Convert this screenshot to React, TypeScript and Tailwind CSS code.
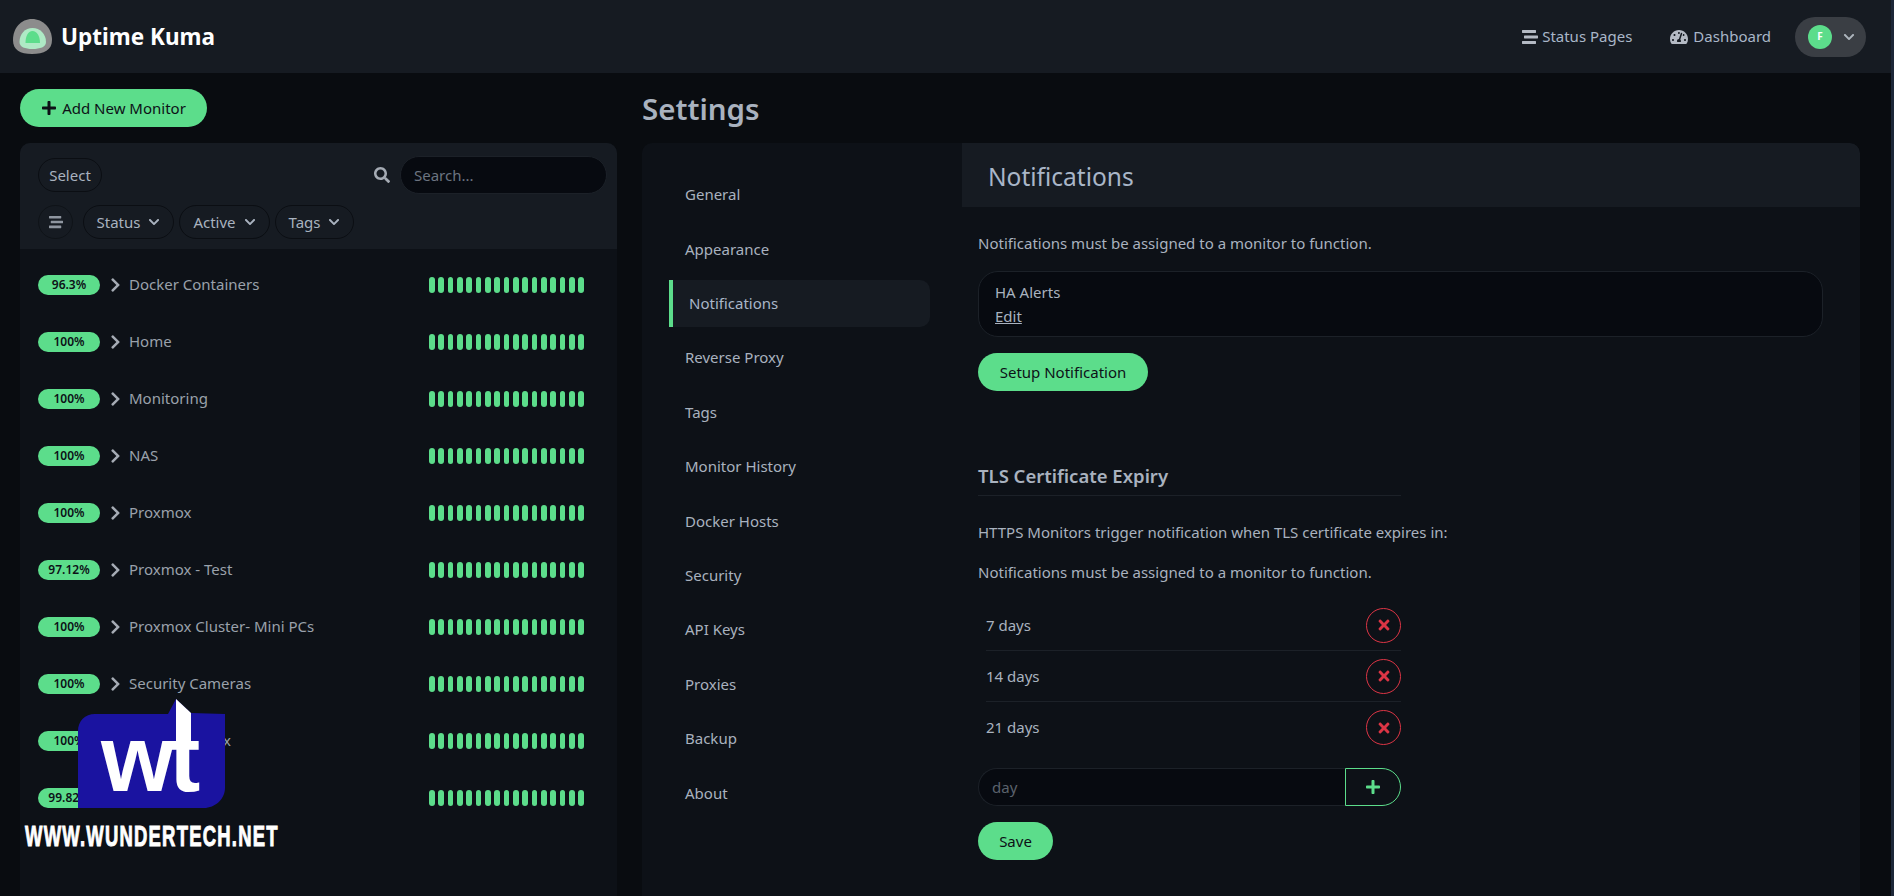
import { FaChevronDown, FaChevronRight, FaPlus, FaSearch, FaStream, FaTachometerAlt, FaTimes } from 'react-icons/fa';

const monitors = [
  { uptime: '96.3%', name: 'Docker Containers' },
  { uptime: '100%', name: 'Home' },
  { uptime: '100%', name: 'Monitoring' },
  { uptime: '100%', name: 'NAS' },
  { uptime: '100%', name: 'Proxmox' },
  { uptime: '97.12%', name: 'Proxmox - Test' },
  { uptime: '100%', name: 'Proxmox Cluster- Mini PCs' },
  { uptime: '100%', name: 'Security Cameras' },
  { uptime: '100%', name: 'Network - Plex' },
  { uptime: '99.82%', name: 'UniFi' },
];

const menu = ['General', 'Appearance', 'Notifications', 'Reverse Proxy', 'Tags', 'Monitor History', 'Docker Hosts', 'Security', 'API Keys', 'Proxies', 'Backup', 'About'];

const beats = Array.from({ length: 17 }, (_, i) => i);

// Status, Active and Tags filters
function FilterButton({ label, width }: { label: string; width: string }) {
  return (
    <button className={`${width} h-[34px] flex items-center justify-center gap-[8px] rounded-full border border-[#0b0e13] text-[15px] text-[#a9b2bf]`}>
      {label}
      <FaChevronDown className="w-3 h-3" />
    </button>
  );
}

function MonitorRow({ uptime, name }: { uptime: string; name: string }) {
  return (
    <div className="h-[57px] flex items-center pl-[18px] pr-[33px]">
      <span className="w-[62px] h-5 flex items-center justify-center rounded-full bg-[#5cdd8b] text-[12px] font-semibold text-[#0d1117]">{uptime}</span>
      <FaChevronRight className="ml-[9px] w-[13px] h-4 text-[#a5abb4]" />
      <span className="ml-[7px] -mt-0.5 text-[15px] text-[#9aa1ab]">{name}</span>
      <div className="ml-auto flex gap-[3.750px]">
        {beats.map((b) => (
          <span key={b} className="w-[5.600px] h-4 rounded-full bg-[#5cdd8b]" />
        ))}
      </div>
    </div>
  );
}

function DayRow({ label, last }: { label: string; last?: boolean }) {
  return (
    <div className={`h-[51px] flex items-center justify-between ml-2 ${last ? '' : 'border-b border-[#1c2128]'}`}>
      <span className="text-[15px] text-[#a9b2bf]">{label}</span>
      <button className="w-[35px] h-[35px] flex items-center justify-center rounded-full border border-[#dc3545] text-[#dc3545]">
        <FaTimes className="w-4 h-4" />
      </button>
    </div>
  );
}

export default function App() {
  return (
    <div className="relative flex w-full h-[896px] overflow-hidden bg-[#090c10] font-['Noto_Sans',sans-serif]">
      <div className="flex-1 min-w-0 flex flex-col">
        {/* Header */}
        <header className="h-[73px] shrink-0 flex items-center bg-[#161b22] pl-[13px] pr-[25px]">
          <svg className="w-[39px] h-[35px]" viewBox="0 0 39 35">
            <path d="M19 0C30 0 39 9 39 21C39 31 31 35 19 35C7 35 0 31 0 21C0 9 8 0 19 0Z" fill="#8c8c8c" />
            <path d="M19.500 9C27 9 33 15 33 23C33 28 27 30 19.500 30C12 30 6.500 28 6.500 23C6.500 15 12 9 19.500 9Z" fill="#aeeac5" />
            <path d="M19.500 12C24 12 27 17 27 24L12.500 24C12.500 17 15 12 19.500 12Z" fill="#5cdd8b" />
          </svg>
          <span className="ml-[9px] text-[22.500px] font-bold text-white">Uptime Kuma</span>
          <div className="ml-auto flex items-center text-[15px] text-[#a9b6c8]">
            <FaStream className="w-4 h-4 text-[#b4bac4]" />
            <span className="ml-[4px]">Status Pages</span>
            <FaTachometerAlt className="ml-[38px] w-[18px] h-[18px] text-[#b4bac4]" />
            <span className="ml-[5px]">Dashboard</span>
            <div className="ml-6 w-[71px] h-10 flex items-center rounded-full bg-[#3a3e44] pl-[13px]">
              <span className="w-6 h-6 flex items-center justify-center rounded-full bg-[#5cdd8b] text-[10px] font-bold text-white">F</span>
              <FaChevronDown className="ml-[11px] w-3 h-3 text-[#adb5bd]" />
            </div>
          </div>
        </header>

        <div className="flex-1 min-h-0 flex pl-5 pr-[31px]">
          {/* Monitor list */}
          <div className="w-[597px] shrink-0 flex flex-col">
            <button className="mt-4 w-[187px] h-[38px] flex items-center justify-center gap-[5px] rounded-full bg-[#5cdd8b] text-[15px] text-[#0d1117]">
              <FaPlus className="w-4 h-4" />
              Add New Monitor
            </button>
            <div className="mt-4 flex-1 rounded-t-[10px] overflow-hidden bg-[#0d1117]">
              <div className="h-[106px] bg-[#161b22] pl-[18px] pr-2.5">
                <div className="pt-[13px] flex items-center justify-between">
                  <button className="w-16 h-[34px] rounded-full border border-[#0b0e13] text-[15px] text-[#a9b2bf]">Select</button>
                  <div className="flex items-center gap-2.5">
                    <FaSearch className="w-4 h-4 text-[#a5abb4]" />
                    <div className="w-[207px] h-[38px] flex items-center rounded-full border border-[#1c2128] bg-[#070a10] pl-[13px] text-[15px] text-[#6c7480]">Search...</div>
                  </div>
                </div>
                <div className="mt-[11px] flex items-center">
                  <button className="w-[35px] h-[34px] flex items-center justify-center rounded-full border border-[#0f1318] text-[#8f96a0]">
                    <FaStream className="w-3.5 h-3.5" />
                  </button>
                  <div className="ml-2.5 flex gap-[5px]">
                    <FilterButton label="Status" width="w-[91px]" />
                    <FilterButton label="Active" width="w-[91px]" />
                    <FilterButton label="Tags" width="w-[79px]" />
                  </div>
                </div>
              </div>
              <div className="pt-[7.500px]">
                {monitors.map((m) => (
                  <MonitorRow key={m.name} uptime={m.uptime} name={m.name} />
                ))}
              </div>
            </div>
          </div>

          {/* Settings */}
          <div className="ml-[25px] flex-1 min-w-0 flex flex-col">
            <h1 className="h-[70px] pt-0.5 shrink-0 flex items-center text-[29.500px] font-semibold text-[#a9b2bf]">Settings</h1>
            <div className="flex-1 flex rounded-t-[10px] overflow-hidden bg-[#0d1117]">
              <nav className="w-[320px] shrink-0 pt-[28px] pl-[27px] pr-[32px]">
                {menu.map((item) => (
                  <div
                    key={item}
                    className={
                      item === 'Notifications'
                        ? 'h-[47px] mb-[7.400px] flex items-center pl-4 border-l-4 border-[#5cdd8b] rounded-r-[10px] bg-[#161b22] text-[15px] text-[#a9b6c8]'
                        : 'h-[47px] mb-[7.400px] flex items-center pl-4 text-[15px] text-[#a9b2bf]'
                    }
                  >
                    {item}
                  </div>
                ))}
              </nav>
              <div className="flex-1 min-w-0">
                <div className="h-16 pt-1 flex items-center pl-[26px] bg-[#161b22] text-[24.500px] text-[#a9b6c8] rounded-tr-[10px]">Notifications</div>
                <div className="pl-4 pr-[37px] pt-[24px] text-[15px] text-[#a9b2bf]">
                  <p className="h-6 leading-6">Notifications must be assigned to a monitor to function.</p>
                  <div className="mt-[16px] h-[66px] flex flex-col justify-center pl-4 rounded-[20px] border border-[#1c2128] bg-[#070a10] leading-6">
                    <span>HA Alerts</span>
                    <span className="underline">Edit</span>
                  </div>
                  <button className="mt-4 w-[170px] h-[38px] rounded-full bg-[#5cdd8b] text-[#0d1117]">Setup Notification</button>
                  <div className="w-[423px]">
                    <h4 className="mt-[70px] h-[35px] border-b border-[#1c2128] text-[18.500px] font-semibold leading-[30px] text-[#a9b2bf]">TLS Certificate Expiry</h4>
                    <p className="mt-[24px] h-6 leading-6 whitespace-nowrap">HTTPS Monitors trigger notification when TLS certificate expires in:</p>
                    <p className="mt-4 h-6 leading-6 whitespace-nowrap">Notifications must be assigned to a monitor to function.</p>
                    <div className="mt-[16px]">
                      <DayRow label="7 days" />
                      <DayRow label="14 days" />
                      <DayRow label="21 days" last />
                    </div>
                    <div className="mt-[15px] h-[38px] flex">
                      <div className="flex-1 flex items-center pl-[13px] rounded-l-full border border-r-0 border-[#1c2128] bg-[#070a10] text-[#5b626c]">day</div>
                      <button className="w-14 flex items-center justify-center rounded-r-full border border-[#5cdd8b] text-[#5cdd8b]">
                        <FaPlus className="w-4 h-4" />
                      </button>
                    </div>
                    <button className="mt-4 w-[75px] h-[38px] rounded-full bg-[#5cdd8b] text-[#0d1117]">Save</button>
                  </div>
                </div>
              </div>
            </div>
          </div>
        </div>
      </div>
      {/* Scrollbar strip */}
      <div className="w-[3px] shrink-0 bg-[#1d2738]" />

      {/* Watermark */}
      <div className="absolute left-[25px] top-[699px] w-[260px] h-[156px]">
        <svg className="absolute left-[53px] top-0 w-[147px] h-[109px]" viewBox="0 0 147 109">
          <path d="M17 15L90 15L98 0L113 14L147 15L147 89C147 100 137 109 126 109L0 109L0 32C0 22 7 15 17 15Z" fill="#1a13a0" />
          <path d="M98 0L113 14L113 50L98 50Z" fill="#ffffff" />
        </svg>
        <span className="absolute left-[76px] top-[10px] text-[94px] leading-[100px] font-bold tracking-[-5px] text-white font-['Liberation_Sans',sans-serif]">wt</span>
        <span className="absolute left-0 top-[119px] origin-left scale-x-[0.615] text-[30px] leading-9 font-bold tracking-[2px] text-white whitespace-nowrap [-webkit-text-stroke:1px_white] font-['Liberation_Sans',sans-serif]">WWW.WUNDERTECH.NET</span>
      </div>
    </div>
  );
}
